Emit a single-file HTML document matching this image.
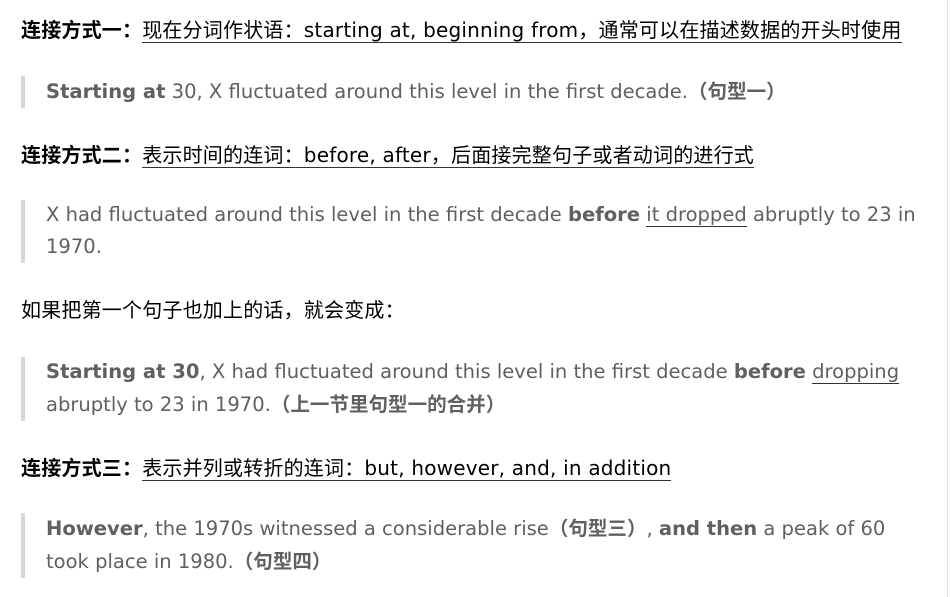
<!DOCTYPE html>
<html><head><meta charset="utf-8"><style>
body{margin:0;width:950px;height:597px;background:#fff;overflow:hidden;position:relative;font-family:"DejaVu Sans","Noto Sans CJK SC",sans-serif;font-size:20px;}
.l{position:absolute;left:21px;white-space:nowrap;line-height:32px;height:32px;color:#000;letter-spacing:0.2px;}
.q{left:46px;color:#606060;font-size:19.55px;letter-spacing:0;}
.u{border-bottom:1px solid #333;}
.bar{position:absolute;left:21px;width:4px;background:#d6d6d6;}
b{font-weight:bold;}
.rl{position:absolute;right:2px;top:0;width:1px;height:597px;background:#e4e4e4;}
</style></head><body>
<div class="rl"></div>
<div class="l" style="top:14px"><b>连接方式一：</b><span class="u">现在分词作状语：starting at, beginning from，通常可以在描述数据的开头时使用</span></div>
<div class="bar" style="top:76px;height:32px"></div>
<div class="l q" style="top:76px"><b>Starting at</b> 30, X fluctuated around this level in the first decade.<b>（句型一）</b></div>
<div class="l" style="top:139px"><b>连接方式二：</b><span class="u">表示时间的连词：before, after，后面接完整句子或者动词的进行式</span></div>
<div class="bar" style="top:200px;height:63px"></div>
<div class="l q" style="top:199px">X had fluctuated around this level in the first decade <b>before</b> <span class="u">it dropped</span> abruptly to 23 in</div>
<div class="l q" style="top:231px">1970.</div>
<div class="l" style="top:294px">如果把第一个句子也加上的话，就会变成：</div>
<div class="bar" style="top:357px;height:64px"></div>
<div class="l q" style="top:356px"><b>Starting at 30</b>, X had fluctuated around this level in the first decade <b>before</b> <span class="u">dropping</span></div>
<div class="l q" style="top:389px">abruptly to 23 in 1970.<b>（上一节里句型一的合并）</b></div>
<div class="l" style="top:452px"><b>连接方式三：</b><span class="u">表示并列或转折的连词：but, however, and, in addition</span></div>
<div class="bar" style="top:513px;height:65px"></div>
<div class="l q" style="top:513px"><b>However</b>, the 1970s witnessed a considerable rise<b>（句型三）</b>, <b>and then</b> a peak of 60</div>
<div class="l q" style="top:546px">took place in 1980.<b>（句型四）</b></div>
</body></html>
